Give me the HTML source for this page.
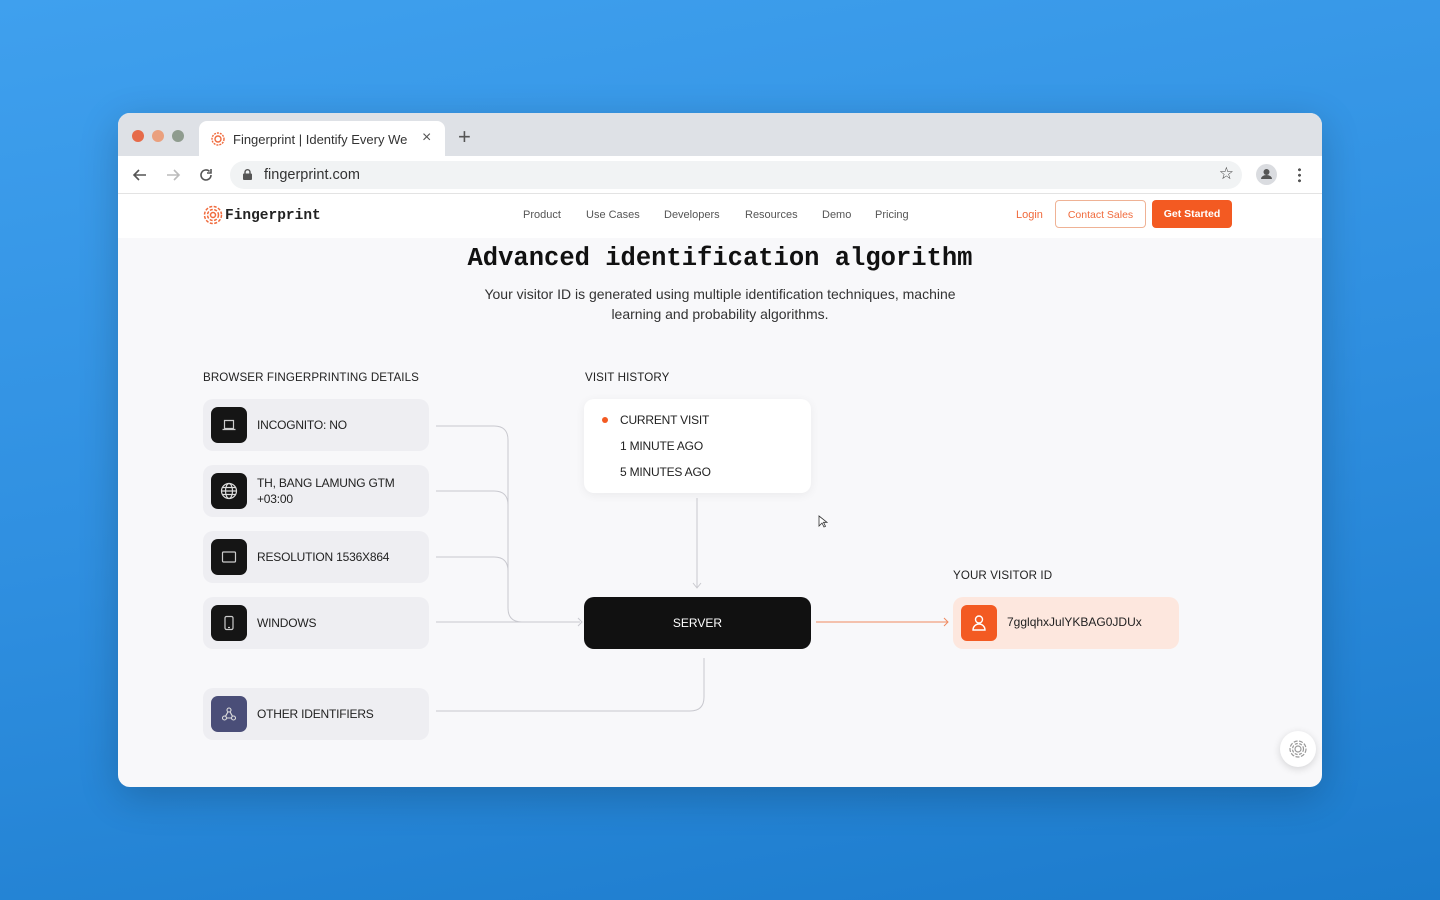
<!DOCTYPE html>
<html><head><meta charset="utf-8"><style>
*{margin:0;padding:0;box-sizing:border-box}
body{width:1440px;height:900px;overflow:hidden;background:linear-gradient(170deg,#3fa0ee 0%,#2f8fe0 50%,#1c7bcc 100%);font-family:"Liberation Sans",sans-serif;position:relative}
.win{position:absolute;left:118px;top:113px;width:1204px;height:674px;border-radius:12px;overflow:hidden;background:#f8f8fa;box-shadow:0 10px 40px rgba(0,0,0,.2)}
.tabbar{position:absolute;left:0;top:0;width:100%;height:43px;background:#dee1e6}
.dot{position:absolute;top:17px;width:12px;height:12px;border-radius:50%}
.tab{position:absolute;left:81px;top:8px;width:246px;height:35px;background:#fff;border-radius:8px 8px 0 0;font-size:13px;color:#333;padding:11px 0 0 34px}
.tool{position:absolute;top:43px;left:0;width:100%;height:38px;background:#fff;border-bottom:1px solid #e3e3e3}
.url{position:absolute;left:112px;top:5px;width:1012px;height:28px;background:#f1f3f4;border-radius:14px;font-size:14.5px;color:#333;padding:6px 0 0 34px}
.nav{position:absolute;top:81px;left:0;width:100%;height:44px;background:#fff}
.nav a{position:absolute;top:15px;font-size:11px;color:#555}
.h1{position:absolute;top:131px;width:100%;text-align:center;font-family:"Liberation Mono",monospace;font-weight:bold;font-size:25.5px;color:#111}
.sub{position:absolute;top:171px;left:0;width:100%;text-align:center;font-size:14px;line-height:20px;color:#333}
.lbl{position:absolute;font-size:11.6px;color:#222;letter-spacing:.1px}
.card{position:absolute;left:85px;width:226px;height:52px;background:#eeeef2;border-radius:10px}
.ic{position:absolute;left:8px;top:8px;width:36px;height:36px;background:#151515;border-radius:7px;display:flex;align-items:center;justify-content:center}
.ct{position:absolute;left:54px;font-size:12px;color:#222;line-height:16px;letter-spacing:-.2px}
</style></head><body>
<div class="win">
<div class="tabbar">
<div class="dot" style="left:14px;background:#e66b4a"></div>
<div class="dot" style="left:34px;background:#eaa07e"></div>
<div class="dot" style="left:54px;background:#8f9c8f"></div>
<div class="tab"><svg style="position:absolute;left:12px;top:11px" width="14" height="14" viewBox="0 0 14 14"><circle cx="7" cy="7" r="6" fill="none" stroke="#f06a3c" stroke-width="1.4" stroke-dasharray="2 1"/><circle cx="7" cy="7" r="3" fill="none" stroke="#f06a3c" stroke-width="1.4"/></svg>Fingerprint | Identify Every We<span style="position:absolute;left:223px;top:8px;font-size:16px;color:#555">×</span></div>
<div style="position:absolute;left:340px;top:11px;font-size:22px;color:#555">+</div>
</div>
<div class="tool">
<svg style="position:absolute;left:14px;top:11px" width="16" height="16" viewBox="0 0 16 16" fill="none" stroke="#555" stroke-width="1.6"><path d="M14 8H2M7 3L2 8l5 5"/></svg>
<svg style="position:absolute;left:47px;top:11px" width="16" height="16" viewBox="0 0 16 16" fill="none" stroke="#bbb" stroke-width="1.6"><path d="M2 8h12M9 3l5 5-5 5"/></svg>
<svg style="position:absolute;left:80px;top:11px" width="16" height="16" viewBox="0 0 16 16" fill="none" stroke="#555" stroke-width="1.6"><path d="M13 8a5 5 0 1 1-1.5-3.6M13 2v4h-4"/></svg>
<div class="url"><svg style="position:absolute;left:13px;top:8px" width="9" height="11" viewBox="0 0 9 11"><rect x="0" y="4.5" width="9" height="6.5" rx="1" fill="#555"/><path d="M2 5V3.2a2.5 2.5 0 0 1 5 0V5" fill="none" stroke="#555" stroke-width="1.4"/></svg>fingerprint.com
<span style="position:absolute;right:8px;top:3px;font-size:17px;color:#444">☆</span></div>
<div style="position:absolute;left:1138px;top:8px;width:21px;height:21px;border-radius:50%;background:#dadce0"><svg width="21" height="21" viewBox="0 0 21 21"><circle cx="10.5" cy="8" r="3" fill="#555"/><path d="M5 15a5.5 4 0 0 1 11 0z" fill="#555"/></svg></div>
<div style="position:absolute;left:1180px;top:11px;width:3px;height:16px;background:radial-gradient(circle,#555 1.4px,transparent 1.6px) 0 0/3px 5.5px"></div>
</div>
<div class="nav">
<svg style="position:absolute;left:85px;top:11px" width="20" height="20" viewBox="0 0 20 20" fill="none" stroke="#f06a3c" stroke-width="1.5"><circle cx="10" cy="10" r="8.5" stroke-dasharray="3 1.5"/><circle cx="10" cy="10" r="5.5" stroke-dasharray="3 1.5"/><circle cx="10" cy="10" r="2.5"/></svg>
<div style="position:absolute;left:107px;top:14px;font-family:'Liberation Mono',monospace;font-weight:bold;font-size:14.5px;color:#222">Fingerprint</div>
<a style="left:405px">Product</a><a style="left:468px">Use Cases</a><a style="left:546px">Developers</a><a style="left:627px">Resources</a><a style="left:704px">Demo</a><a style="left:757px">Pricing</a>
<a style="left:898px;color:#f06a3c">Login</a>
<div style="position:absolute;left:937px;top:6px;width:91px;height:28px;border:1px solid #efb295;border-radius:4px;font-size:10.5px;color:#f06a3c;text-align:center;padding-top:8px">Contact Sales</div>
<div style="position:absolute;left:1034px;top:6px;width:80px;height:28px;background:#f35a22;border-radius:4px;font-size:10.5px;color:#fff;font-weight:bold;text-align:center;padding-top:8px">Get Started</div>
</div>
<div class="h1">Advanced identification algorithm</div>
<div class="sub">Your visitor ID is generated using multiple identification techniques, machine<br>learning and probability algorithms.</div>
<div class="lbl" style="left:85px;top:258px">BROWSER FINGERPRINTING DETAILS</div>
<div class="lbl" style="left:467px;top:258px">VISIT HISTORY</div>
<div class="lbl" style="left:835px;top:456px">YOUR VISITOR ID</div>
<svg style="position:absolute;left:0;top:0" width="1204" height="674" fill="none" stroke="#c9c9cf" stroke-width="1">
<path d="M318 313H376q14 0 14 14V495q0 14 14 14H462"/>
<path d="M318 378H376q14 0 14 14"/>
<path d="M318 444H376q14 0 14 14"/>
<path d="M318 509H462"/>
<path d="M318 598H572q14 0 14-14V545"/>
<path d="M579 385V474"/><path d="M575 470l4 5 4-5"/>
<path d="M460 505l4 4-4 4"/>
<path d="M698 509H830" stroke="#f08a60"/><path d="M826 505l4 4-4 4" stroke="#f08a60"/>
</svg>
<div class="card" style="top:286px"><div class="ic"><svg width="16" height="16" viewBox="0 0 16 16" fill="none" stroke="#ccc" stroke-width="1.2"><path d="M3.5 3.5h9v8h-9zM1.5 12.5h13"/></svg></div><div class="ct" style="top:18px">INCOGNITO: NO</div></div>
<div class="card" style="top:352px"><div class="ic"><svg width="18" height="18" viewBox="0 0 18 18" fill="none" stroke="#ddd" stroke-width="1.2"><circle cx="9" cy="9" r="7.5"/><ellipse cx="9" cy="9" rx="3.5" ry="7.5"/><path d="M1.5 9h15M2.5 5.5h13M2.5 12.5h13"/></svg></div><div class="ct" style="top:10px">TH, BANG LAMUNG GTM<br>+03:00</div></div>
<div class="card" style="top:418px"><div class="ic"><svg width="16" height="16" viewBox="0 0 16 16" fill="none" stroke="#ccc" stroke-width="1.2"><rect x="1.5" y="3" width="13" height="10" rx="1"/></svg></div><div class="ct" style="top:18px">RESOLUTION 1536X864</div></div>
<div class="card" style="top:484px"><div class="ic"><svg width="16" height="16" viewBox="0 0 16 16" fill="none" stroke="#ccc" stroke-width="1.2"><rect x="4" y="1.5" width="8" height="13" rx="1.5"/><path d="M7 12.5h2"/></svg></div><div class="ct" style="top:18px">WINDOWS</div></div>
<div class="card" style="top:575px"><div class="ic" style="background:#4a4e78"><svg width="16" height="16" viewBox="0 0 16 16" fill="none" stroke="#ddd" stroke-width="1.1"><circle cx="8" cy="4" r="2"/><circle cx="3.5" cy="12" r="2"/><circle cx="12.5" cy="12" r="2"/><path d="M7 5.8L4.5 10.3M9 5.8l2.5 4.5M5.5 12h5"/></svg></div><div class="ct" style="top:18px">OTHER IDENTIFIERS</div></div>
<div style="position:absolute;left:466px;top:286px;width:227px;height:94px;background:#fff;border-radius:10px;box-shadow:0 2px 10px rgba(0,0,0,.06);font-size:12px;color:#222;letter-spacing:-.2px">
<div style="position:absolute;left:18px;top:18px;width:6px;height:6px;border-radius:50%;background:#f35a22"></div>
<div style="position:absolute;left:36px;top:14px">CURRENT VISIT</div>
<div style="position:absolute;left:36px;top:40px">1 MINUTE AGO</div>
<div style="position:absolute;left:36px;top:66px">5 MINUTES AGO</div></div>
<div style="position:absolute;left:466px;top:484px;width:227px;height:52px;background:#111;border-radius:10px;color:#fff;font-size:12px;text-align:center;padding-top:19px">SERVER</div>
<div style="position:absolute;left:835px;top:484px;width:226px;height:52px;background:#fde7de;border-radius:10px">
<div style="position:absolute;left:8px;top:8px;width:36px;height:36px;background:#f35a22;border-radius:6px"><svg width="36" height="36" viewBox="0 0 36 36" fill="none" stroke="#fff" stroke-width="1.4"><circle cx="18" cy="14.5" r="3.5"/><path d="M12 25a6 6 0 0 1 12 0z"/></svg></div>
<div style="position:absolute;left:54px;top:18px;font-size:12px;color:#222">7gglqhxJulYKBAG0JDUx</div></div>
<div style="position:absolute;left:1162px;top:618px;width:36px;height:36px;border-radius:50%;background:#fff;box-shadow:0 2px 8px rgba(0,0,0,.15)"><svg width="36" height="36" viewBox="0 0 36 36" fill="none" stroke="#999" stroke-width="1.2"><circle cx="18" cy="18" r="8" stroke-dasharray="4 1.5"/><circle cx="18" cy="18" r="5.5" stroke-dasharray="3 1.5"/><circle cx="18" cy="18" r="3"/></svg></div>
<svg style="position:absolute;left:700px;top:402px" width="10" height="14" viewBox="0 0 10 14"><path d="M1 1v10l3-3 2 4 1.5-.7-2-4H9z" fill="#fff" stroke="#333" stroke-width=".8"/></svg>
</div>
</body></html>
